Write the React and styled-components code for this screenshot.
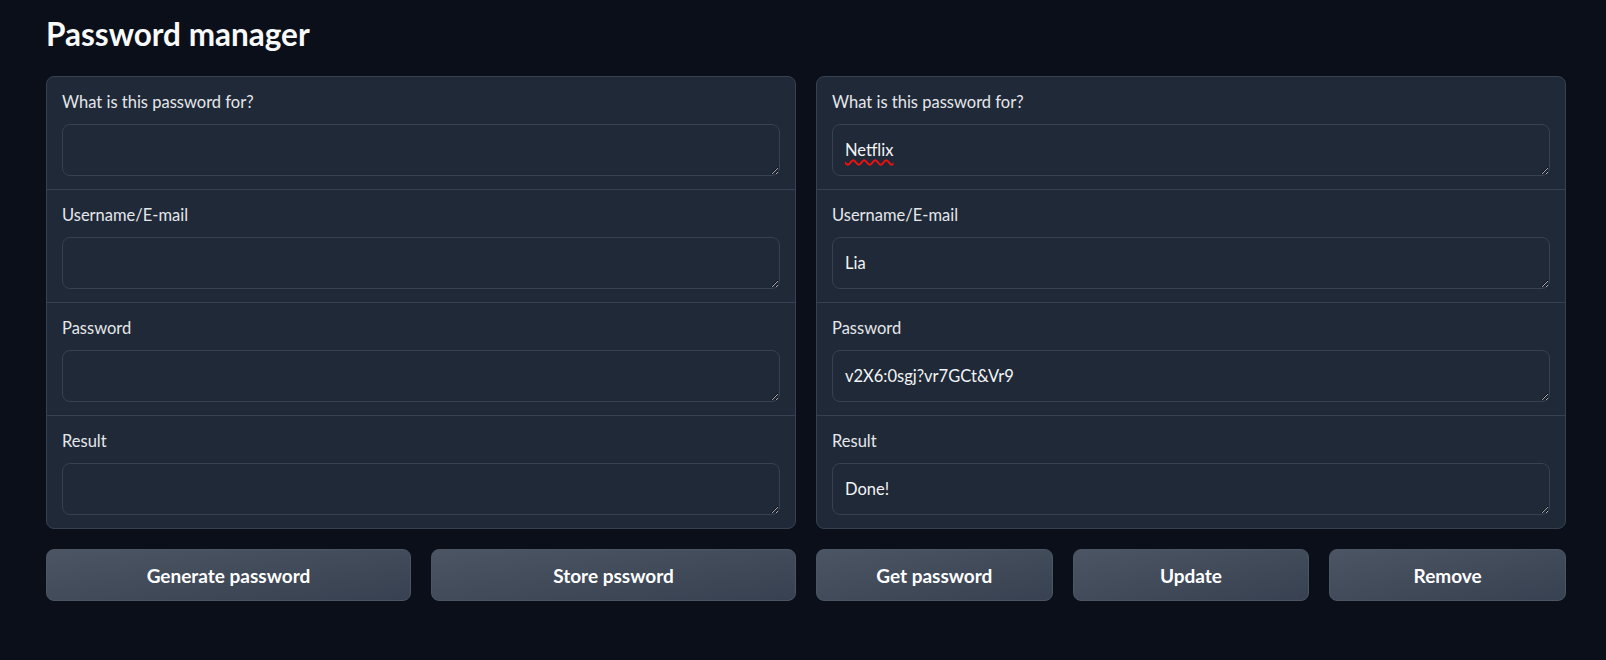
import React from "react";
import styled, { createGlobalStyle } from "styled-components";

const GlobalStyle = createGlobalStyle`
  html, body {
    margin: 0;
    padding: 0;
    background: #0b0f19;
    color-scheme: dark;
  }
  body {
    font-family: Lato, "Noto Sans", sans-serif;
    color: #f3f4f6;
  }
`;

const Page = styled.div`
  padding: 14px 40px 30px 46px;
  background: #0b0f19;
`;

const Title = styled.h1`
  margin: 0 0 22px;
  font-size: 31.5px;
  line-height: 40px;
  font-weight: 700;
  color: #f9fafb;
`;

const Columns = styled.div`
  display: grid;
  grid-template-columns: 1fr 1fr;
  gap: 20px;
`;

const Column = styled.div`
  display: flex;
  flex-direction: column;
  gap: 20px;
`;

const Panel = styled.div`
  background: #1f2937;
  border: 1px solid #374151;
  border-radius: 8px;
  overflow: hidden;
`;

const Section = styled.div`
  padding: 14px 15px 13px;
  border-top: ${(p) => (p.$first ? "none" : "1px solid #374151")};
`;

const Label = styled.div`
  font-size: 16.5px;
  line-height: 22px;
  color: #e5e7eb;
  margin-bottom: 11px;
`;

const TextBox = styled.div`
  box-sizing: border-box;
  height: 52px;
  padding: 12px 12px;
  border: 1px solid #374151;
  border-radius: 8px;
  background: #1f2937;
  font-size: 16.5px;
  line-height: 26px;
  color: #f3f4f6;
  overflow: auto;
  resize: vertical;
`;

const Misspelled = styled.span`
  text-decoration: underline wavy #f01010;
  text-decoration-thickness: 1.5px;
  text-underline-offset: 3px;
`;

const ButtonRow = styled.div`
  display: grid;
  grid-template-columns: repeat(${(p) => p.$count}, 1fr);
  gap: 20px;
`;

const Button = styled.button`
  height: 52px;
  border: 1px solid #4b5563;
  border-radius: 8px;
  background: linear-gradient(to bottom right, #4b5563, #374151);
  color: #ffffff;
  font-family: Lato, "Noto Sans", sans-serif;
  font-size: 19px;
  font-weight: 700;
  cursor: pointer;
`;

const fields = ["What is this password for?", "Username/E-mail", "Password", "Result"];

const Form = ({ values }) => (
  <Panel>
    {fields.map((label, i) => (
      <Section key={label} $first={i === 0}>
        <Label>{label}</Label>
        <TextBox>{values[i]}</TextBox>
      </Section>
    ))}
  </Panel>
);

export default function App() {
  return (
    <Page>
      <GlobalStyle />
      <Title>Password manager</Title>
      <Columns>
        <Column>
          <Form values={["", "", "", ""]} />
          <ButtonRow $count={2}>
            <Button>Generate password</Button>
            <Button>Store pssword</Button>
          </ButtonRow>
        </Column>
        <Column>
          <Form values={[<Misspelled key="n">Netflix</Misspelled>, "Lia", "v2X6:0sgj?vr7GCt&Vr9", "Done!"]} />
          <ButtonRow $count={3}>
            <Button>Get password</Button>
            <Button>Update</Button>
            <Button>Remove</Button>
          </ButtonRow>
        </Column>
      </Columns>
    </Page>
  );
}
